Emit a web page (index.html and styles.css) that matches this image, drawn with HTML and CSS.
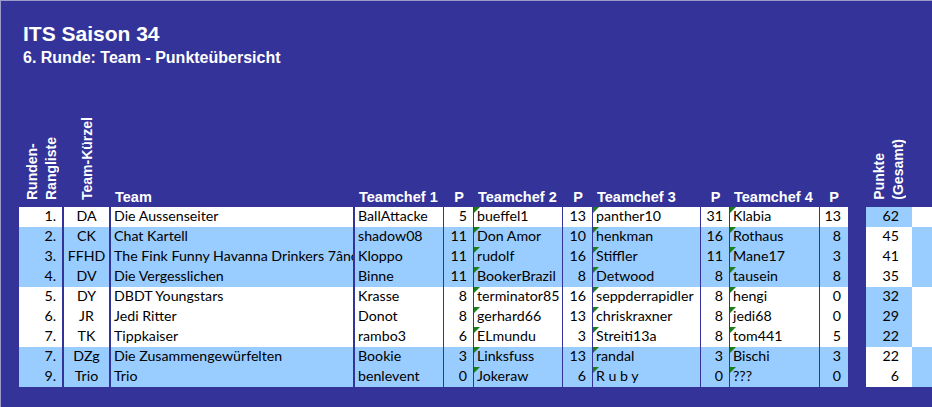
FILE: index.html
```html
<!DOCTYPE html>
<html lang="de">
<head>
<meta charset="utf-8">
<title>ITS Saison 34</title>
<link rel="stylesheet" href="styles.css">
</head>
<body>
<div class="page">
  <div class="title">ITS Saison 34</div>
  <div class="subtitle">6. Runde: Team - Punkteübersicht</div>
  <div class="sheet">
    <div class="row head">
      <div class="c c1 vert-cell"><span class="vert">Runden-<br>Rangliste</span></div>
      <div class="c c2 vert-cell"><span class="vert">Team-Kürzel</span></div>
      <div class="c c3">Team</div>
      <div class="c c4">Teamchef 1</div>
      <div class="c c5 hp">P</div>
      <div class="c c6">Teamchef 2</div>
      <div class="c c7 hp">P</div>
      <div class="c c8">Teamchef 3</div>
      <div class="c c9 hp">P</div>
      <div class="c c10">Teamchef 4</div>
      <div class="c c11 hp">P</div>
      <div class="c gap"></div>
      <div class="c c12 vert-cell"><span class="vert">Punkte<br>(Gesamt)</span></div>
    </div>

    <div class="row data white">
      <div class="c c1">1.</div><div class="c c2">DA</div><div class="c c3">Die Aussenseiter</div>
      <div class="c c4">BallAttacke</div><div class="c c5 num">5</div>
      <div class="c c6 tri">bueffel1</div><div class="c c7 num">13</div>
      <div class="c c8 tri">panther10</div><div class="c c9 num">31</div>
      <div class="c c10 tri">Klabia</div><div class="c c11 num">13</div>
      <div class="c gap"></div><div class="c c12 blue">62</div>
    </div>
    <div class="row data blue">
      <div class="c c1">2.</div><div class="c c2">CK</div><div class="c c3">Chat Kartell</div>
      <div class="c c4">shadow08</div><div class="c c5 num">11</div>
      <div class="c c6 tri">Don Amor</div><div class="c c7 num">10</div>
      <div class="c c8 tri">henkman</div><div class="c c9 num">16</div>
      <div class="c c10 tri">Rothaus</div><div class="c c11 num">8</div>
      <div class="c gap"></div><div class="c c12 white">45</div>
    </div>
    <div class="row data blue">
      <div class="c c1">3.</div><div class="c c2">FFHD</div><div class="c c3">The Fink Funny Havanna Drinkers 7ânos</div>
      <div class="c c4">Kloppo</div><div class="c c5 num">11</div>
      <div class="c c6 tri">rudolf</div><div class="c c7 num">16</div>
      <div class="c c8 tri">Stiffler</div><div class="c c9 num">11</div>
      <div class="c c10 tri">Mane17</div><div class="c c11 num">3</div>
      <div class="c gap"></div><div class="c c12 white">41</div>
    </div>
    <div class="row data blue">
      <div class="c c1">4.</div><div class="c c2">DV</div><div class="c c3">Die Vergesslichen</div>
      <div class="c c4">Binne</div><div class="c c5 num">11</div>
      <div class="c c6 tri">BookerBrazil</div><div class="c c7 num">8</div>
      <div class="c c8 tri">Detwood</div><div class="c c9 num">8</div>
      <div class="c c10 tri">tausein</div><div class="c c11 num">8</div>
      <div class="c gap"></div><div class="c c12 white">35</div>
    </div>
    <div class="row data white">
      <div class="c c1">5.</div><div class="c c2">DY</div><div class="c c3">DBDT Youngstars</div>
      <div class="c c4">Krasse</div><div class="c c5 num">8</div>
      <div class="c c6 tri">terminator85</div><div class="c c7 num">16</div>
      <div class="c c8 tri">seppderrapidler</div><div class="c c9 num">8</div>
      <div class="c c10 tri">hengi</div><div class="c c11 num">0</div>
      <div class="c gap"></div><div class="c c12 blue">32</div>
    </div>
    <div class="row data white">
      <div class="c c1">6.</div><div class="c c2">JR</div><div class="c c3">Jedi Ritter</div>
      <div class="c c4">Donot</div><div class="c c5 num">8</div>
      <div class="c c6 tri">gerhard66</div><div class="c c7 num">13</div>
      <div class="c c8 tri">chriskraxner</div><div class="c c9 num">8</div>
      <div class="c c10 tri">jedi68</div><div class="c c11 num">0</div>
      <div class="c gap"></div><div class="c c12 blue">29</div>
    </div>
    <div class="row data white">
      <div class="c c1">7.</div><div class="c c2">TK</div><div class="c c3">Tippkaiser</div>
      <div class="c c4">rambo3</div><div class="c c5 num">6</div>
      <div class="c c6 tri">ELmundu</div><div class="c c7 num">3</div>
      <div class="c c8 tri">Streiti13a</div><div class="c c9 num">8</div>
      <div class="c c10 tri">tom441</div><div class="c c11 num">5</div>
      <div class="c gap"></div><div class="c c12 blue">22</div>
    </div>
    <div class="row data blue">
      <div class="c c1">7.</div><div class="c c2">DZg</div><div class="c c3">Die Zusammengewürfelten</div>
      <div class="c c4">Bookie</div><div class="c c5 num">3</div>
      <div class="c c6 tri">Linksfuss</div><div class="c c7 num">13</div>
      <div class="c c8 tri">randal</div><div class="c c9 num">3</div>
      <div class="c c10 tri">Bischi</div><div class="c c11 num">3</div>
      <div class="c gap"></div><div class="c c12 white">22</div>
    </div>
    <div class="row data blue">
      <div class="c c1">9.</div><div class="c c2">Trio</div><div class="c c3">Trio</div>
      <div class="c c4">benlevent</div><div class="c c5 num">0</div>
      <div class="c c6 tri">Jokeraw</div><div class="c c7 num">6</div>
      <div class="c c8 tri">R u b y</div><div class="c c9 num">0</div>
      <div class="c c10 tri">???</div><div class="c c11 num">0</div>
      <div class="c gap"></div><div class="c c12 white">6</div>
    </div>
  </div>
</div>
</body>
</html>
```

FILE: styles.css
```css
* { box-sizing: border-box; }
html, body { margin: 0; padding: 0; background: #333399; }
.page {
  width: 932px;
  height: 407px;
  background: #333399;
  border-top: 1px solid #9a9acb;
  border-left: 1px solid #9a9acb;
  padding: 21px 0 0 18px;
  overflow: hidden;
  font-family: "Liberation Sans", Arial, sans-serif;
  color: #fff;
}
.title {
  margin-left: 4px;
  font-size: 21px;
  font-weight: bold;
  line-height: 24px;
}
.subtitle {
  margin-left: 4px;
  margin-top: 2px;
  font-size: 16px;
  font-weight: bold;
  line-height: 19px;
}
.sheet { margin-top: 40px; }
.row {
  display: grid;
  grid-template-columns: 45px 47px 244px 89px 30px 89px 30px 108px 29px 90px 28px 18px 46px;
}
.head { height: 100px; }
.head .c {
  display: flex;
  align-items: flex-end;
  font-size: 14.5px;
  font-weight: bold;
  line-height: 16px;
  padding: 0 0 2px 4px;
  white-space: nowrap;
}
.head .hp { justify-content: center; padding-left: 0; }
.head .vert-cell { justify-content: center; padding: 0 0 7px 0; }
.vert {
  display: inline-block;
  writing-mode: vertical-rl;
  transform: rotate(180deg);
  font-size: 14px;
  line-height: 19px;
  white-space: nowrap;
}
.data { height: 20px; }
.data .c {
  height: 20px;
  font-family: Lato, "Open Sans", sans-serif;
  font-size: 14.2px;
  line-height: 18px;
  color: #000;
  padding-left: 3px;
  white-space: nowrap;
  overflow: hidden;
  position: relative;
}
.white { background: #ffffff; }
.blue { background: #99ccff; }
.data .gap { background: #333399; }
.data .c1, .data .c2, .data .c3,
.data .c4, .data .c5, .data .c6, .data .c7,
.data .c8, .data .c9, .data .c10 { border-right: 1px solid #333399; }
.data .c1, .data .c2, .data .c3 { border-right-width: 2px; }
.data .c1 { text-align: right; padding-right: 6px; }
.data .c2 { text-align: center; padding-left: 0; }
.data .num { text-align: right; padding-right: 6px; padding-left: 0; }
.data .c11 { padding-right: 7px; }
.data .c12 { text-align: right; padding-right: 13px; }
.tri::before {
  content: "";
  position: absolute;
  left: 0;
  top: 0;
  width: 6px;
  height: 6px;
  background: #1c7f1c;
  clip-path: polygon(0 0, 100% 0, 0 100%);
}
```
